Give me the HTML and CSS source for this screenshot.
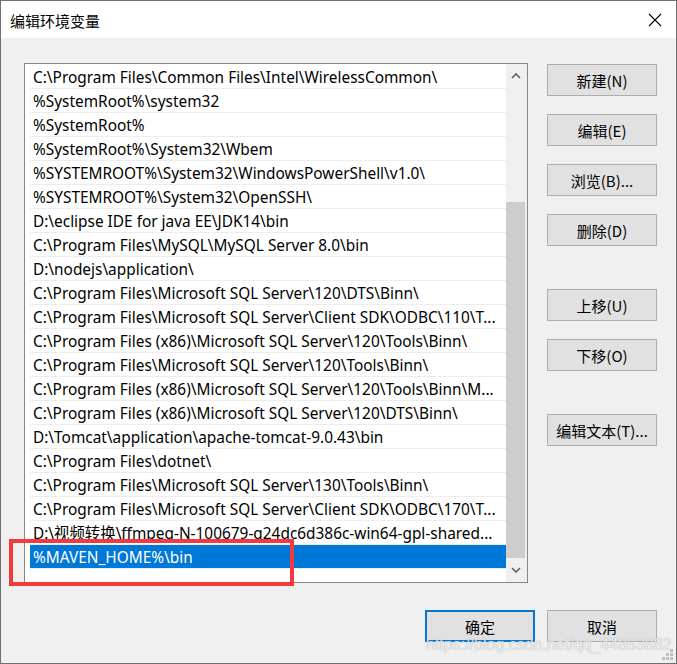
FILE: index.html
```html
<!DOCTYPE html>
<html>
<head>
<meta charset="utf-8">
<link rel="stylesheet" href="styles.css">
</head>
<body>
<div class="window">
  <div class="titlebar">
    <span class="title">编辑环境变量</span>
    <svg class="close" width="14" height="14" viewBox="0 0 14 14"><path d="M1 1 L13 13 M13 1 L1 13" stroke="#000" stroke-width="1.1" fill="none"/></svg>
  </div>
  <div class="content">
    <div class="main">
      <div class="listbox">
        <ul class="rows">
          <li class="row">C:\Program Files\Common Files\Intel\WirelessCommon\</li>
          <li class="row">%SystemRoot%\system32</li>
          <li class="row">%SystemRoot%</li>
          <li class="row">%SystemRoot%\System32\Wbem</li>
          <li class="row">%SYSTEMROOT%\System32\WindowsPowerShell\v1.0\</li>
          <li class="row">%SYSTEMROOT%\System32\OpenSSH\</li>
          <li class="row">D:\eclipse IDE for java EE\JDK14\bin</li>
          <li class="row">C:\Program Files\MySQL\MySQL Server 8.0\bin</li>
          <li class="row">D:\nodejs\application\</li>
          <li class="row">C:\Program Files\Microsoft SQL Server\120\DTS\Binn\</li>
          <li class="row">C:\Program Files\Microsoft SQL Server\Client SDK\ODBC\110\T...</li>
          <li class="row">C:\Program Files (x86)\Microsoft SQL Server\120\Tools\Binn\</li>
          <li class="row">C:\Program Files\Microsoft SQL Server\120\Tools\Binn\</li>
          <li class="row">C:\Program Files (x86)\Microsoft SQL Server\120\Tools\Binn\M...</li>
          <li class="row">C:\Program Files (x86)\Microsoft SQL Server\120\DTS\Binn\</li>
          <li class="row">D:\Tomcat\application\apache-tomcat-9.0.43\bin</li>
          <li class="row">C:\Program Files\dotnet\</li>
          <li class="row">C:\Program Files\Microsoft SQL Server\130\Tools\Binn\</li>
          <li class="row">C:\Program Files\Microsoft SQL Server\Client SDK\ODBC\170\T...</li>
          <li class="row">D:\视频转换\ffmpeg-N-100679-g24dc6d386c-win64-gpl-shared...</li>
          <li class="row selected">%MAVEN_HOME%\bin</li>
        </ul>
        <div class="scrollbar">
          <div class="arrow">
            <svg width="10" height="6" viewBox="0 0 10 6"><path d="M1 5 L5 1 L9 5" stroke="#606060" stroke-width="1.6" fill="none"/></svg>
          </div>
          <div class="track">
            <div class="thumb"></div>
          </div>
          <div class="arrow">
            <svg width="10" height="6" viewBox="0 0 10 6"><path d="M1 1 L5 5 L9 1" stroke="#606060" stroke-width="1.6" fill="none"/></svg>
          </div>
        </div>
      </div>
      <div class="side">
        <div class="group">
          <button class="btn">新建(N)</button>
          <button class="btn">编辑(E)</button>
          <button class="btn">浏览(B)...</button>
          <button class="btn">删除(D)</button>
        </div>
        <div class="group">
          <button class="btn">上移(U)</button>
          <button class="btn">下移(O)</button>
        </div>
        <div class="group">
          <button class="btn">编辑文本(T)...</button>
        </div>
      </div>
    </div>
    <div class="footer">
      <button class="btn primary">确定</button>
      <button class="btn">取消</button>
    </div>
  </div>
  <div class="highlight"></div>
  <div class="watermark">https://blog.csdn.net/qq_44853882</div>
  <svg class="grip" width="12" height="12" viewBox="0 0 12 12">
    <rect x="8" y="0" width="3" height="3" fill="#c0c0c0"/>
    <rect x="4" y="4" width="3" height="3" fill="#c0c0c0"/>
    <rect x="8" y="4" width="3" height="3" fill="#c0c0c0"/>
    <rect x="0" y="8" width="3" height="3" fill="#c0c0c0"/>
    <rect x="4" y="8" width="3" height="3" fill="#c0c0c0"/>
    <rect x="8" y="8" width="3" height="3" fill="#c0c0c0"/>
  </svg>
</div>
</body>
</html>
```

FILE: styles.css
```css
* { box-sizing: border-box; }
html, body { margin: 0; padding: 0; }
body {
  font-family: "Noto Sans", "Noto Sans CJK SC", sans-serif;
  font-size: 15px;
  color: #000;
}
.window {
  position: relative;
  width: 677px;
  height: 664px;
  border: 1px solid #707070;
  background: #f0f0f0;
  overflow: hidden;
}
.titlebar {
  height: 37px;
  background: #fff;
  display: flex;
  align-items: center;
  justify-content: space-between;
  padding: 0 14px 0 9px;
}
.title {
  font-family: "Noto Sans CJK SC", sans-serif;
  font-size: 15px;
  line-height: 1;
  margin-top: 1px;
}
.close { display: block; }
.content {
  padding: 25px 19px 0 23px;
}
.main {
  display: flex;
  gap: 19px;
}
.listbox {
  width: 504px;
  height: 520px;
  border: 1px solid #828790;
  background: #fff;
  display: flex;
}
.rows {
  list-style: none;
  margin: 0;
  padding: 1px 0 0 5px;
  width: 481px;
}
.row {
  height: 24px;
  line-height: 24px;
  padding: 1px 0 0 3px;
  border-bottom: 1px solid #ededed;
  white-space: nowrap;
  overflow: hidden;
  font-size: 15.4px;
}
.row.selected {
  background: #0078d7;
  color: #fff;
  border-bottom-color: #ededed;
}
.scrollbar {
  width: 21px;
  background: #f0f0f0;
  display: flex;
  flex-direction: column;
}
.arrow {
  height: 24px;
  display: flex;
  align-items: center;
  justify-content: center;
  padding-right: 2px;
}
.arrow svg { display: block; }
.track {
  flex: 1;
  display: flex;
  flex-direction: column;
  justify-content: flex-end;
}
.thumb {
  height: 356px;
  width: 19px;
  background: #cdcdcd;
}
.side {
  width: 110px;
  display: flex;
  flex-direction: column;
  gap: 43px;
  padding-top: 1px;
}
.group {
  display: flex;
  flex-direction: column;
  gap: 18px;
}
.btn {
  width: 110px;
  height: 32px;
  background: #e1e1e1;
  border: 1px solid #adadad;
  font-family: "Noto Sans CJK SC", sans-serif;
  font-size: 15px;
  color: #000;
  padding: 0;
  margin: 0;
}
.btn.primary {
  border: 2px solid #0078d7;
}
.footer {
  display: flex;
  justify-content: flex-end;
  gap: 12px;
  margin-top: 27px;
}
.highlight {
  position: absolute;
  left: 8px;
  top: 538px;
  width: 285px;
  height: 47px;
  border: 4px solid #f53a3d;
}
.watermark {
  position: absolute;
  left: 425px;
  top: 635px;
  font-family: "Liberation Sans", Arial, sans-serif;
  font-size: 16px;
  color: rgba(255,255,255,0.8);
  text-shadow: 0 0 1px rgba(110,110,110,0.7);
  white-space: nowrap;
}
.grip {
  position: absolute;
  right: 2px;
  bottom: 2px;
}
```
